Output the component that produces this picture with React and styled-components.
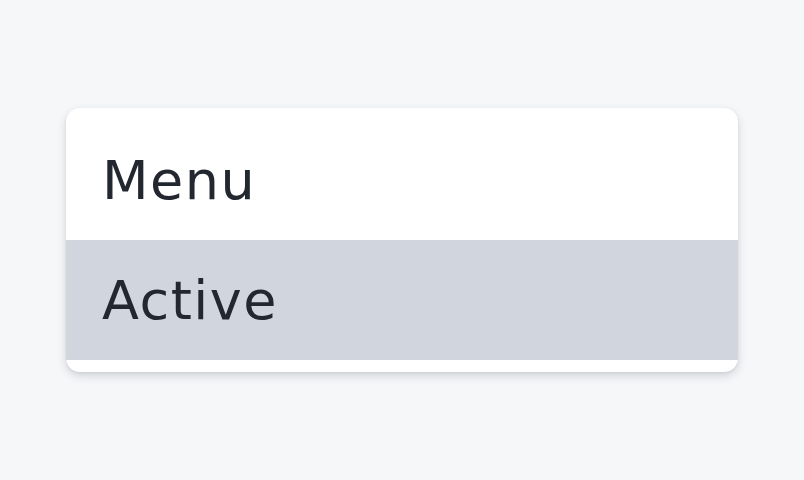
import React from "react";
import styled, { createGlobalStyle } from "styled-components";

const GlobalStyle = createGlobalStyle`
  html, body {
    margin: 0;
    padding: 0;
    background: #f6f7f9;
  }
`;

const Page = styled.div`
  width: 804px;
  height: 480px;
  display: flex;
  align-items: center;
  justify-content: center;
  font-family: "DejaVu Sans", sans-serif;
`;

const Card = styled.ul`
  list-style: none;
  margin: 0;
  padding: 12px 0;
  width: 672px;
  background: #ffffff;
  border-radius: 14px;
  box-shadow: 0 4px 10px rgba(30, 40, 60, 0.16), 0 1px 3px rgba(30, 40, 60, 0.08);
  overflow: hidden;
`;

const Item = styled.li`
  height: 120px;
  display: flex;
  align-items: center;
  padding: 0 36px;
  font-size: 54px;
  letter-spacing: 1.5px;
  color: #23272f;
  background: ${(p) => (p.active ? "#d1d6de" : "transparent")};
`;

const App = () => (
  <>
    <GlobalStyle />
    <Page>
      <Card>
        <Item>Menu</Item>
        <Item active>Active</Item>
      </Card>
    </Page>
  </>
);

export default App;
